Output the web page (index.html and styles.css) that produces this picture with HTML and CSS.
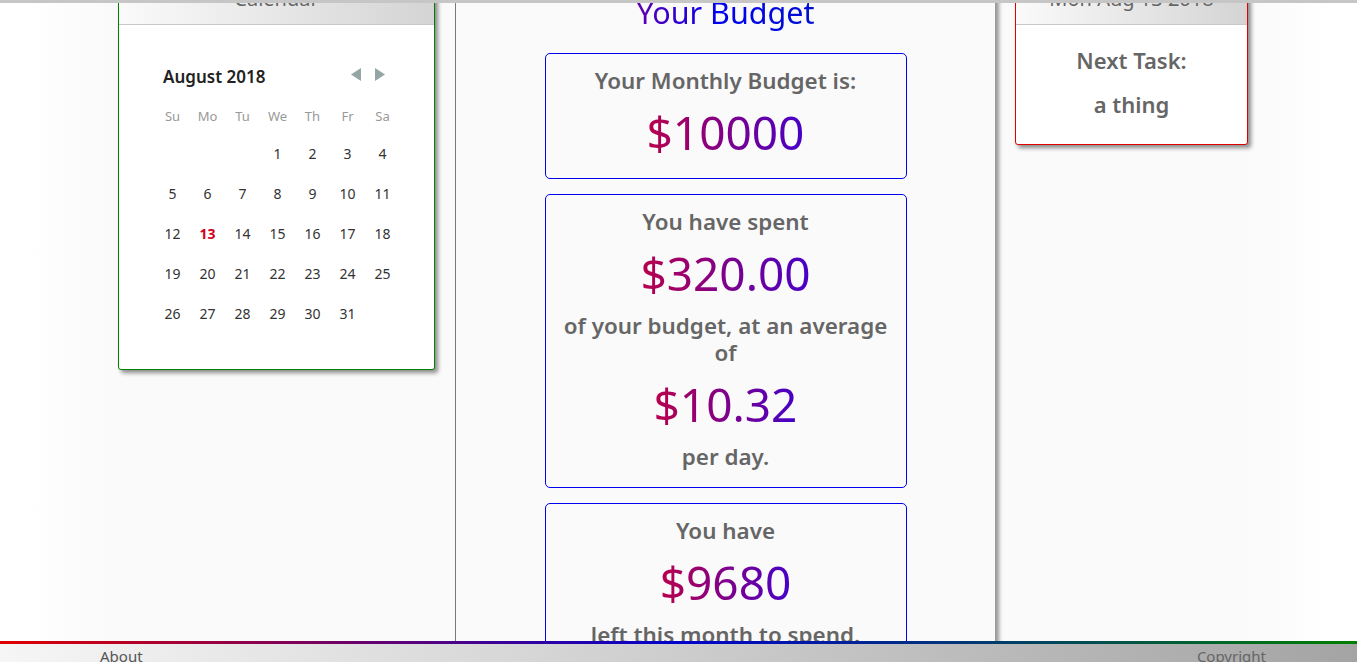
FILE: index.html
```html
<!DOCTYPE html>
<html lang="en">
<head>
<meta charset="utf-8">
<title>Your Budget</title>
<link rel="stylesheet" href="styles.css">
</head>
<body>
<div class="topline"></div>
<main class="page">
  <section class="card card-cal">
    <header class="card-head">Calendar</header>
    <div class="cal">
      <div class="cal-top">
        <span class="cal-month">August 2018</span>
        <span class="cal-nav">
          <svg class="arrow" width="10" height="13" viewBox="0 0 10 13"><polygon points="10,0 10,13 0,6.5" fill="#95a5a6"/></svg>
          <svg class="arrow" width="10" height="13" viewBox="0 0 10 13"><polygon points="0,0 0,13 10,6.5" fill="#95a5a6"/></svg>
        </span>
      </div>
      <table class="cal-grid">
        <thead>
          <tr><th>Su</th><th>Mo</th><th>Tu</th><th>We</th><th>Th</th><th>Fr</th><th>Sa</th></tr>
        </thead>
        <tbody>
          <tr><td></td><td></td><td></td><td>1</td><td>2</td><td>3</td><td>4</td></tr>
          <tr><td>5</td><td>6</td><td>7</td><td>8</td><td>9</td><td>10</td><td>11</td></tr>
          <tr><td>12</td><td class="today">13</td><td>14</td><td>15</td><td>16</td><td>17</td><td>18</td></tr>
          <tr><td>19</td><td>20</td><td>21</td><td>22</td><td>23</td><td>24</td><td>25</td></tr>
          <tr><td>26</td><td>27</td><td>28</td><td>29</td><td>30</td><td>31</td><td></td></tr>
        </tbody>
      </table>
    </div>
  </section>

  <section class="budget">
    <h1 class="budget-title"><span class="grad-title">Your Budget</span></h1>
    <div class="box">
      <p class="label">Your Monthly Budget is:</p>
      <p class="amount"><span class="grad">$10000</span></p>
    </div>
    <div class="box">
      <p class="label">You have spent</p>
      <p class="amount"><span class="grad">$320.00</span></p>
      <p class="label">of your budget, at an average of</p>
      <p class="amount"><span class="grad">$10.32</span></p>
      <p class="label">per day.</p>
    </div>
    <div class="box">
      <p class="label">You have</p>
      <p class="amount"><span class="grad">$9680</span></p>
      <p class="label">left this month to spend.</p>
    </div>
  </section>

  <section class="card card-task">
    <header class="card-head">Mon Aug 13 2018</header>
    <div class="task">
      <p class="task-line">Next Task:</p>
      <p class="task-line">a thing</p>
    </div>
  </section>
</main>
<footer class="footer">
  <div class="footline"></div>
  <div class="footbar">
    <a class="foot-link" href="#">About</a>
    <span class="foot-copy">Copyright</span>
  </div>
</footer>
</body>
</html>
```

FILE: styles.css
```css
html, body {
  margin: 0;
  padding: 0;
}

body {
  height: 662px;
  overflow: hidden;
  display: flex;
  flex-direction: column;
  font-family: "Noto Sans", "Open Sans", sans-serif;
  background: linear-gradient(to right, #ffffff 2%, #fafafa 8%, #fafafa 92%, #ffffff 98%);
  color: #666;
}

.topline {
  height: 3px;
  flex: none;
  background: #c6c6c6;
}

.page {
  flex: 1;
  min-height: 0;
  overflow: hidden;
  display: flex;
  align-items: flex-start;
  gap: 20px;
  padding-left: 118px;
}

.page > section {
  margin-top: -30px;
  flex: none;
}

/* cards */
.card {
  background: #fff;
  border-radius: 0 0 3px 3px;
  box-shadow: 3px 3px 4px rgba(0, 0, 0, 0.45);
}

.card-cal {
  width: 315px;
  border: 1px solid #008000;
}

.card-task {
  width: 231px;
  border: 1px solid #e00000;
}

.card-head {
  padding: 10px 0;
  line-height: 30px;
  font-size: 20px;
  text-align: center;
  color: #666;
  background: linear-gradient(to right, #fafafa, #d4d4d4);
  border-bottom: 1px solid #c8c8c8;
}

/* calendar */
.cal {
  padding: 39px 0 36px 36px;
}

.cal-top {
  width: 245px;
  height: 24px;
  display: flex;
  align-items: center;
  justify-content: space-between;
  box-sizing: border-box;
  padding: 0 15px 0 8px;
  margin-bottom: 10px;
}

.cal-month {
  font-size: 17px;
  font-weight: 600;
  color: #222;
}

.cal-nav {
  display: flex;
  gap: 14px;
  margin-top: -3px;
}

.arrow {
  display: block;
}

.cal-grid {
  border-collapse: collapse;
  width: 245px;
  table-layout: fixed;
}

.cal-grid th {
  height: 35px;
  padding: 0;
  font-size: 13px;
  font-weight: 400;
  color: #999;
  text-align: center;
}

.cal-grid td {
  height: 40px;
  padding: 0;
  font-size: 14px;
  color: #333;
  text-align: center;
}

.cal-grid td.today {
  color: #d0001b;
  font-weight: 700;
}

/* budget */
.budget {
  width: 539px;
  border-left: 1px solid #7a7a7a;
  background: #fafafa;
  box-shadow: 4px 0 4px rgba(0, 0, 0, 0.4);
  padding-top: 21px;
  display: flex;
  flex-direction: column;
  align-items: center;
  gap: 15px;
  min-height: 720px;
}

.budget-title {
  margin: 0 0 8px;
  font-size: 30.5px;
  line-height: 36px;
  font-weight: 400;
}

.grad-title {
  background: linear-gradient(to right, #6000b0, #0000ee 45%, #0010d0);
  -webkit-background-clip: text;
  background-clip: text;
  color: transparent;
}

.box {
  width: 360px;
  border: 1px solid #0000ee;
  border-radius: 5px;
  padding: 13px 0 7px;
  text-align: center;
}

.label {
  margin: 0;
  font-size: 22.4px;
  line-height: 27px;
  font-weight: 600;
  color: #666;
  padding: 0 18px;
}

.box .label:last-child {
  margin-bottom: 10px;
}

.amount {
  margin: 10px 0;
  font-size: 46px;
  line-height: 57px;
}

.grad {
  background: linear-gradient(to right, #b8004c, #4600c8);
  -webkit-background-clip: text;
  background-clip: text;
  color: transparent;
}

/* task */
.task {
  padding: 13px 0 18px;
  text-align: center;
}

.task-line {
  margin: 0;
  font-size: 22px;
  line-height: 44px;
  font-weight: 600;
  color: #666;
}

/* footer */
.footer {
  flex: none;
}

.footline {
  height: 3px;
  background: linear-gradient(to right, #e00000, #0000cc 50%, #008000);
}

.footbar {
  height: 18px;
  overflow: hidden;
  display: flex;
  justify-content: space-between;
  padding: 2px 91px 0 100px;
  box-sizing: border-box;
  background: linear-gradient(to right, #f6f6f6, #a4a4a4);
  font-size: 15px;
  line-height: 20px;
}

.foot-link {
  color: #555;
  text-decoration: none;
}

.foot-copy {
  color: #666;
}
```
